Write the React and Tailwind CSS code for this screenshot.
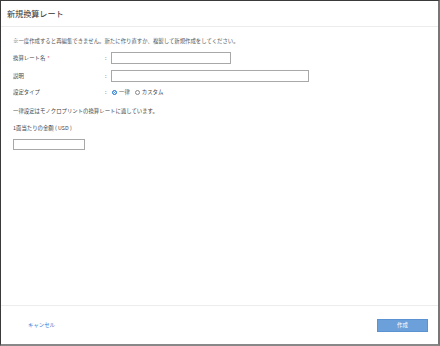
import React, { useState } from "react";

const font = { fontFamily: '"Noto Sans CJK JP", "Liberation Sans", sans-serif' };

const FormRow = ({ label, required, children, height = "h-[12px]" }) => (
  <div className={`flex items-center ${height}`}>
    <div className="w-[92px] text-[5.4px] text-[#444]">
      {label}
      {required && <span className="text-[#e04040] ml-[2px]">*</span>}
    </div>
    <div className="w-[6px] text-[5.4px] text-[#666]">:</div>
    {children}
  </div>
);

const Radio = ({ checked, label, onClick }) => (
  <button type="button" onClick={onClick} className="flex items-center gap-[2px] mr-[5px]">
    <span
      className={`w-[5px] h-[5px] rounded-full border ${
        checked ? "border-[#2f7fd8] bg-[#2f7fd8] ring-1 ring-inset ring-white" : "border-[#888] bg-white"
      }`}
    />
    <span className="text-[5.4px] text-[#444]">{label}</span>
  </button>
);

export default function App() {
  const [type, setType] = useState("flat");

  return (
    <div
      style={font}
      className="w-[440px] h-[346px] bg-white flex flex-col border-l border-t border-[#3a3a3a] border-r-2 border-b-2 border-r-[#777] border-b-[#888]"
    >
      {/* Header */}
      <div className="h-[26px] shrink-0 flex items-center px-[6px] border-b border-[#ececec]">
        <h1 className="text-[8.2px] text-[#333] tracking-[-0.1px]">新規換算レート</h1>
      </div>

      {/* Body */}
      <div className="flex-1 px-[12px] pt-[10px]">
        <p className="h-[8px] flex items-center text-[5.4px] text-[#555]">
          ※一度作成すると再編集できません。新たに作り直すか、複製して新規作成をしてください。
        </p>

        <div className="mt-[7px] flex flex-col gap-[6px]">
          <FormRow label="換算レート名" required>
            <input className="w-[120px] h-[12px] border border-[#a8a8a8] outline-none" />
          </FormRow>
          <FormRow label="説明">
            <input className="w-[198px] h-[12px] border border-[#a8a8a8] outline-none" />
          </FormRow>
          <FormRow label="設定タイプ" height="h-[8px]">
            <div className="flex items-center pl-[1px]">
              <Radio checked={type === "flat"} label="一律" onClick={() => setType("flat")} />
              <Radio checked={type === "custom"} label="カスタム" onClick={() => setType("custom")} />
            </div>
          </FormRow>
        </div>

        <p className="mt-[11px] h-[8px] flex items-center text-[5.4px] text-[#444]">
          一律設定はモノクロプリントの換算レートに適しています。
        </p>

        <p className="mt-[9px] h-[8px] flex items-center text-[5.4px] text-[#444]">1面当たりの金額 ( USD )</p>
        <input className="mt-[3px] w-[72px] h-[11px] border border-[#a8a8a8] outline-none" />
      </div>

      {/* Footer */}
      <div className="h-[39px] shrink-0 border-t border-[#ececec] flex items-center justify-between pl-[27px] pr-[10px]">
        <button type="button" className="text-[5.4px] text-[#3a7bd5]">キャンセル</button>
        <button type="button" className="w-[51px] h-[13px] bg-[#6ba0da] text-white text-[5.4px] border border-[#5b93d2]">
          作成
        </button>
      </div>
    </div>
  );
}
